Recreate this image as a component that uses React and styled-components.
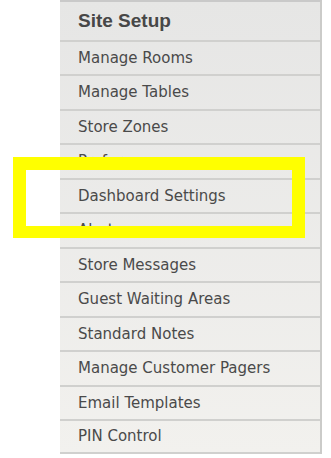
import React from 'react'
import styled, { createGlobalStyle } from 'styled-components';

const items = [
  'Manage Rooms',
  'Manage Tables',
  'Store Zones',
  'Preferences',
  'Dashboard Settings',
  'Alerts',
  'Store Messages',
  'Guest Waiting Areas',
  'Standard Notes',
  'Manage Customer Pagers',
  'Email Templates',
  'PIN Control',
];

function App() {
  return (
    <>
      <GlobalStyle />
      <Page>
        <Menu>
          <Title>Site Setup</Title>
          {items.map((item, index) => (
            <Item key={index}>{item}</Item>
          ))}
        </Menu>
        <Highlight />
      </Page>
    </>
  )
}

export default App

const GlobalStyle = createGlobalStyle`
  html, body {
    margin: 0;
    padding: 0;
    background: #ffffff;
  }
`

const Page = styled.div`
  position: relative;
  width: 331px;
  height: 458px;
  overflow: hidden;
  padding-left: 60px;
  box-sizing: border-box;
  font-family: "DejaVu Sans", sans-serif;
`

const Menu = styled.div`
  width: 262px;
  border-top: 2px solid #c9c9c9;
  border-right: 2px solid #cbcbc9;
  box-sizing: border-box;
  background: linear-gradient(#e6e6e5, #f2f1ee);
`

const Title = styled.div`
  height: 37.5px;
  display: flex;
  align-items: center;
  padding-left: 18px;
  font-family: "Liberation Sans", Arial, sans-serif;
  font-size: 19px;
  font-weight: bold;
  color: #474747;
`

const Item = styled.div`
  height: 34.5px;
  box-sizing: border-box;
  border-top: 2px solid #d0d0ce;
  display: flex;
  align-items: center;
  padding-left: 18px;
  font-size: 15px;
  color: #4a4a4a;
  &:last-child {
    border-bottom: 2px solid #d0d0ce;
  }
`

const Highlight = styled.div`
  position: absolute;
  left: 13px;
  top: 157px;
  width: 292px;
  height: 81px;
  box-sizing: border-box;
  border: 13px solid #ffff00;
  border-bottom-width: 12px;
`
